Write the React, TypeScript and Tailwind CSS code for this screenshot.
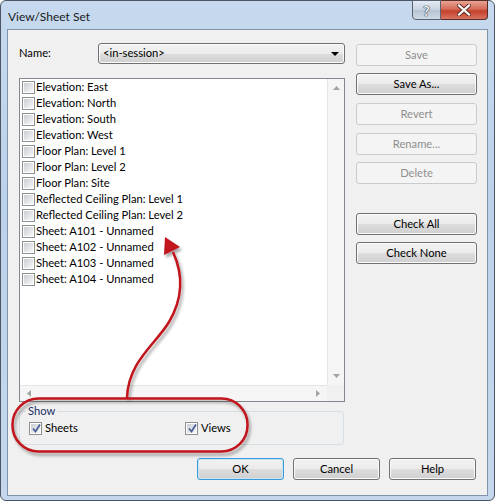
import clsx from "clsx";

const items = [
  "Elevation: East",
  "Elevation: North",
  "Elevation: South",
  "Elevation: West",
  "Floor Plan: Level 1",
  "Floor Plan: Level 2",
  "Floor Plan: Site",
  "Reflected Ceiling Plan: Level 1",
  "Reflected Ceiling Plan: Level 2",
  "Sheet: A101 - Unnamed",
  "Sheet: A102 - Unnamed",
  "Sheet: A103 - Unnamed",
  "Sheet: A104 - Unnamed",
];

function CheckBox({ checked }: { checked?: boolean }) {
  return (
    <span className="relative flex h-[13px] w-[13px] shrink-0 border border-[#8e8f8f] bg-white p-[1px]">
      <span className="block h-full w-full bg-[linear-gradient(135deg,#cbcfd5,#f6f6f6)]" />
      {checked && (
        <svg className="absolute left-[1px] top-[0px]" width="11" height="11" viewBox="0 0 11 11">
          <path d="M2 5.5 L4.5 8.5 L9 1.5" fill="none" stroke="#4a5f97" strokeWidth="1.8" />
        </svg>
      )}
    </span>
  );
}

function Btn({
  label,
  disabled,
  focused,
  className,
}: {
  label: string;
  disabled?: boolean;
  focused?: boolean;
  className?: string;
}) {
  return (
    <div
      className={clsx(
        "flex h-[22px] items-center justify-center rounded-[3px] border",
        disabled
          ? "border-[#c9ccce] bg-[#f4f4f4] text-[#8f8f8f]"
          : focused
            ? "border-[#3c9ad6] bg-[linear-gradient(#f2f2f2_0%,#ebebeb_50%,#dddddd_51%,#cfcfcf_100%)] text-black shadow-[inset_0_0_0_1px_#c6e6f8]"
            : "border-[#707070] bg-[linear-gradient(#f2f2f2_0%,#ebebeb_50%,#dddddd_51%,#cfcfcf_100%)] text-black shadow-[inset_0_0_0_1px_#fbfbfb]",
        className
      )}
    >
      {label}
    </div>
  );
}

function Tri({ dir }: { dir: "up" | "down" | "left" | "right" }) {
  const d = {
    up: "M0 4 L3.5 0 L7 4 Z",
    down: "M0 0 L7 0 L3.5 4 Z",
    left: "M4 0 L4 7 L0 3.5 Z",
    right: "M0 0 L4 3.5 L0 7 Z",
  }[dir];
  const w = dir === "up" || dir === "down" ? 7 : 4;
  const h = dir === "up" || dir === "down" ? 4 : 7;
  return (
    <svg width={w} height={h} viewBox={`0 0 ${w} ${h}`}>
      <path d={d} fill="#a3a3a3" />
    </svg>
  );
}

export default function App() {
  return (
    <div className="relative h-[501px] w-[496px] bg-white font-['Lato','Liberation_Sans',sans-serif] text-[11.2px] text-black">
      <div className="flex h-[501px] w-[495px] flex-col rounded-[6px] border border-[#4b5563] bg-[linear-gradient(180deg,#c6d9ee,#bcd2ea_40%,#c4d7ec)] px-[6px] pb-[4px]">
        {/* title bar */}
        <div className="flex h-[28px] shrink-0 items-start justify-between">
          <div className="pl-[1px] pt-[7px] text-[12px] text-[#1a1a1a]">View/Sheet Set</div>
          <div className="-mt-[1px] flex">
            <div className="flex h-[20px] w-[29px] items-center justify-center rounded-bl-[4px] border border-[#5a6470] bg-[linear-gradient(#e4ebf3,#c7d3e0_50%,#b6c4d4_51%,#cfdae6)] text-[14px] font-bold text-[#eef2f6] [text-shadow:0_0_1px_#36404c,0_0_1px_#36404c,0_0_1px_#36404c]">
              ?
            </div>
            <div className="flex h-[20px] w-[47px] items-center justify-center rounded-br-[4px] border border-l-0 border-[#5a2b27] bg-[linear-gradient(#e8a394,#d46a57_45%,#c5402c_55%,#d8735f)]">
              <svg width="14" height="12" viewBox="0 0 14 12">
                <path d="M2 1.5 L12 10.5 M12 1.5 L2 10.5" stroke="#5b2a22" strokeWidth="4" strokeLinecap="square" />
                <path d="M2 1.5 L12 10.5 M12 1.5 L2 10.5" stroke="#ffffff" strokeWidth="2.2" strokeLinecap="square" />
              </svg>
            </div>
          </div>
        </div>

        {/* client area */}
        <div className="flex flex-1 flex-col border border-[#8094aa] bg-[#f0f0f0]">
          <div className="flex pl-[11px] pt-[13px]">
            {/* left column */}
            <div className="flex w-[326px] flex-col">
              <div className="flex h-[21px] items-center">
                <span className="w-[79px]">Name:</span>
                <div className="flex h-[21px] flex-1 items-center justify-between rounded-[3px] border border-[#707070] bg-[linear-gradient(#f2f2f2_0%,#ebebeb_50%,#dddddd_51%,#cfcfcf_100%)] pl-[4px] pr-[5px] shadow-[inset_0_0_0_1px_#fbfbfb]">
                  <span>&lt;in-session&gt;</span>
                  <svg width="8" height="4" viewBox="0 0 8 4">
                    <path d="M0 0 L8 0 L4 4 Z" fill="#000" />
                  </svg>
                </div>
              </div>

              {/* list */}
              <div className="mt-[14px] grid h-[324px] grid-cols-[1fr_17px] grid-rows-[1fr_16px] border border-[#828790] bg-white">
                <div className="flex flex-col pl-[2px]">
                  {items.map((it) => (
                    <div key={it} className="flex h-[16px] items-center gap-[1px] whitespace-nowrap">
                      <CheckBox />
                      <span>{it}</span>
                    </div>
                  ))}
                </div>
                <div className="flex flex-col items-center justify-between border-l border-[#e4e4e4] bg-[#f5f5f5] py-[7px]">
                  <Tri dir="up" />
                  <Tri dir="down" />
                </div>
                <div className="flex items-center justify-between border-t border-[#e4e4e4] bg-[#f5f5f5] px-[7px]">
                  <Tri dir="left" />
                  <Tri dir="right" />
                </div>
                <div className="bg-[#f0f0f0]" />
              </div>

              {/* show group */}
              <div className="relative mt-[9px] flex h-[34px] w-[325px] items-start rounded-[3px] border border-[#d5dfe5] pl-[9px] pt-[10px]">
                <span className="absolute -top-[9px] left-[6px] bg-[#f0f0f0] px-[2px] leading-[16px] text-[#1b2f6a]">Show</span>
                <div className="flex h-[13px] w-[156px] items-center gap-[3px]">
                  <CheckBox checked />
                  <span>Sheets</span>
                </div>
                <div className="flex h-[13px] items-center gap-[3px]">
                  <CheckBox checked />
                  <span>Views</span>
                </div>
              </div>
            </div>

            {/* right column */}
            <div className="ml-[11px] mt-[1px] flex w-[121px] flex-col">
              <Btn label="Save" disabled />
              <Btn label="Save As..." className="mt-[7px]" />
              <Btn label="Revert" disabled className="mt-[8px]" />
              <Btn label="Rename..." disabled className="mt-[8px]" />
              <Btn label="Delete" disabled className="mt-[7px]" />
              <Btn label="Check All" className="mt-[29px]" />
              <Btn label="Check None" className="mt-[7px]" />
            </div>
          </div>

          <div className="mt-[13px] flex justify-end gap-[9px] pr-[11px]">
            <Btn label="OK" focused className="w-[87px]" />
            <Btn label="Cancel" className="w-[87px]" />
            <Btn label="Help" className="w-[87px]" />
          </div>
        </div>
      </div>

      {/* red callout annotation */}
      <svg className="pointer-events-none absolute left-0 top-0" width="496" height="501" viewBox="0 0 496 501">
        <defs>
          <filter id="sh" x="-10%" y="-10%" width="130%" height="130%">
            <feDropShadow dx="2" dy="3" stdDeviation="1.5" floodColor="#000" floodOpacity="0.35" />
          </filter>
        </defs>
        <g filter="url(#sh)">
          <rect x="12.5" y="398.5" width="235" height="53" rx="26" ry="26" fill="none" stroke="#c0131d" strokeWidth="2.5" />
          <path d="M127 398 C128 362 155 345 169 322 C182 300 184 276 173 252" fill="none" stroke="#c0131d" strokeWidth="2.5" />
          <path d="M165 237 L164 255 L180 247 Z" fill="#c0131d" />
        </g>
      </svg>
    </div>
  );
}
